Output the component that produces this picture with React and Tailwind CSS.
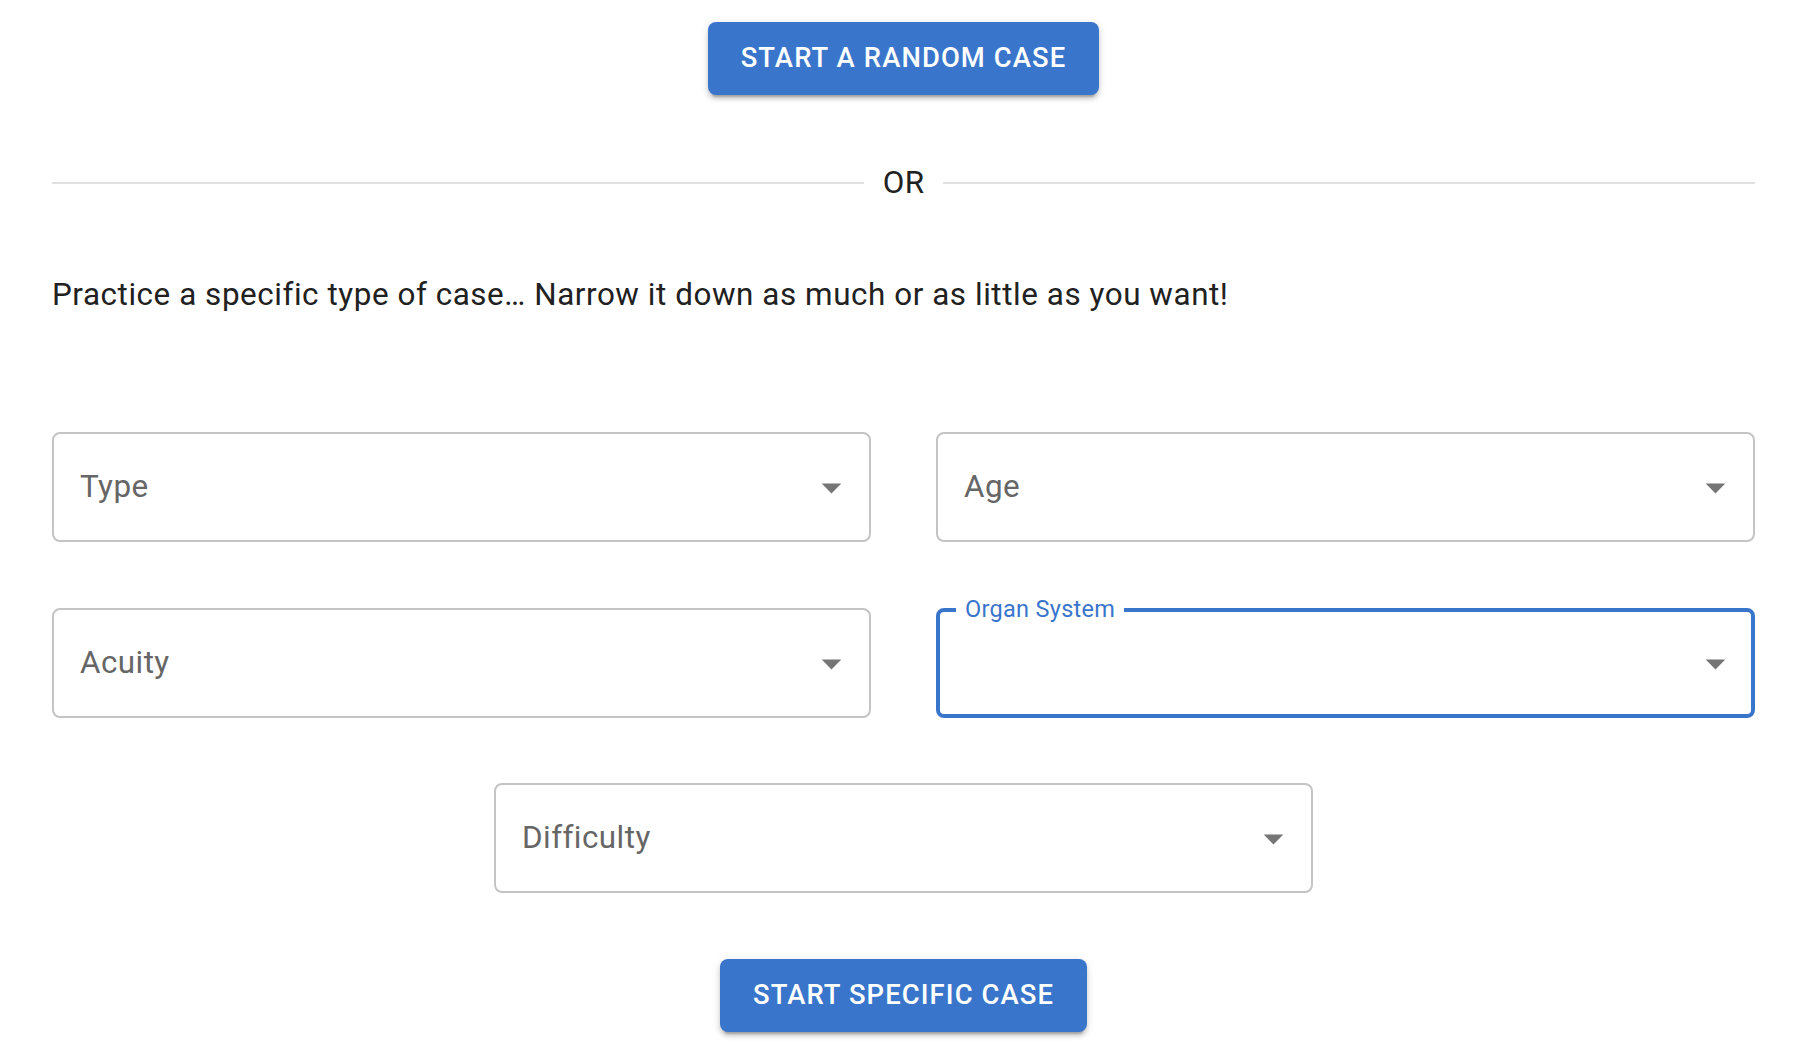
import { useState } from 'react';

const blue = 'bg-[#3a75cc]';

const Caret = () => (
  <svg viewBox="0 0 24 24" className="w-[47px] h-[47px] fill-[#757575] shrink-0">
    <path d="M7 10l5 5 5-5z" />
  </svg>
);

const SelectField = ({ label, focused, className = '' }) => {
  if (focused) {
    return (
      <div className={`relative h-[110px] rounded-[8px] border-[4px] border-[#3a75cc] flex items-center justify-end pr-[12px] ${className}`}>
        <span className="absolute left-[16px] top-[-2px] -translate-y-1/2 bg-white px-[9px] text-[23.5px] leading-none tracking-[0.3px] text-[#3a75cc]">
          {label}
        </span>
        <Caret />
      </div>
    );
  }
  return (
    <div className={`h-[110px] rounded-[8px] border-2 border-[#c4c4c4] flex items-center justify-between pl-[26px] pr-[14px] ${className}`}>
      <span className="text-[31.4px] tracking-[0.45px] text-[#666666]">{label}</span>
      <Caret />
    </div>
  );
};

const ActionButton = ({ children }) => (
  <button className={`${blue} h-[73px] px-[33px] rounded-[8px] text-white text-[27.4px] font-medium tracking-[1.1px] uppercase flex items-center shadow-[0_6px_2px_-4px_rgba(0,0,0,0.2),0_4px_4px_0_rgba(0,0,0,0.14),0_2px_10px_0_rgba(0,0,0,0.12)]`}>
    {children}
  </button>
);

export default function App() {
  const [organ] = useState(true);

  return (
    <div className="min-h-[1054px] bg-white font-[Roboto,sans-serif] pl-[52px] pr-[51px] pt-[22px] flex flex-col">
      <div className="flex justify-center">
        <ActionButton>Start a random case</ActionButton>
      </div>

      {/* divider */}
      <div className="mt-[64px] h-[47px] flex items-center">
        <div className="flex-1 h-[2px] bg-[#e0e0e0]" />
        <span className="px-[19px] text-[31.4px] leading-[47px] tracking-[0.3px] text-[#212121]">OR</span>
        <div className="flex-1 h-[2px] bg-[#e0e0e0]" />
      </div>

      <p className="mt-[65px] text-[31.4px] leading-[47px] tracking-[0.56px] text-[#212121]">
        Practice a specific type of case… Narrow it down as much or as little as you want!
      </p>

      <div className="mt-[114px] grid grid-cols-2 gap-x-[65px] gap-y-[66px]">
        <SelectField label="Type" />
        <SelectField label="Age" />
        <SelectField label="Acuity" />
        <SelectField label="Organ System" focused={organ} />
      </div>

      <div className="mt-[65px] flex justify-center">
        <SelectField label="Difficulty" className="w-[819px]" />
      </div>

      <div className="mt-[66px] flex justify-center">
        <ActionButton>Start specific case</ActionButton>
      </div>
    </div>
  );
}
